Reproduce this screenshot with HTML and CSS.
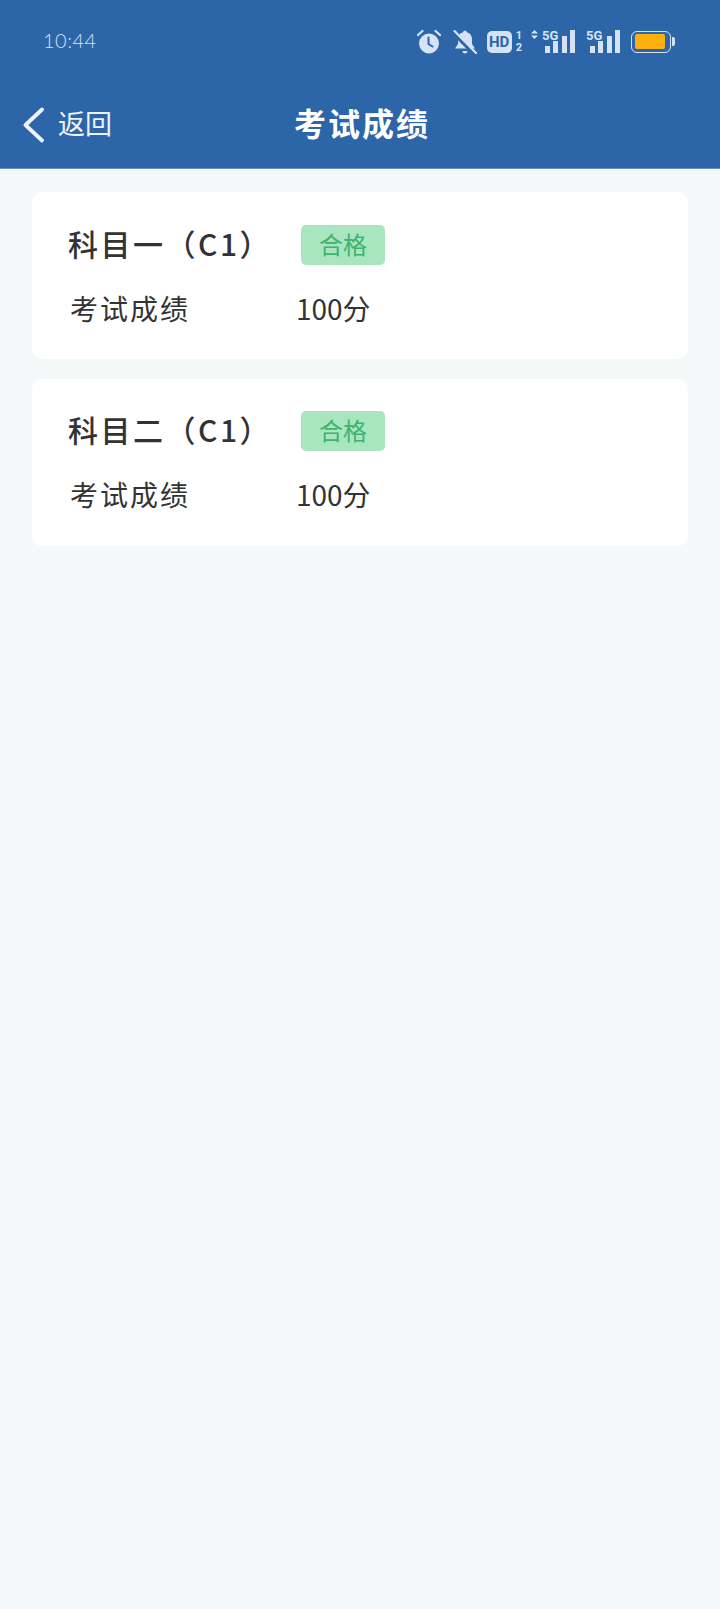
FILE: index.html
```html
<!DOCTYPE html>
<html lang="zh-CN">
  <head>
    <meta charset="UTF-8" />
    <title>考试成绩</title>
    <meta name="viewport" content="width=device-width, initial-scale=1.0" />
    <link rel="stylesheet" href="styles.css">
  </head>
  <body>
    <header class="top">
      <div class="status">
        <span class="clock">10:44</span>
        <div class="status-icons">
          <svg class="ic-alarm" width="24" height="24" viewBox="0 0 24 24">
            <circle cx="12" cy="13.500" r="10" fill="#d5e3f5" />
            <path d="M11.500 7.500v6.500l4 2.500" fill="none" stroke="#2c66a9" stroke-width="2" stroke-linecap="round" />
            <path d="M1 5l4.500-4M23 5l-4.500-4" fill="none" stroke="#d5e3f5" stroke-width="2.200" stroke-linecap="round" />
          </svg>
          <svg class="ic-bell" width="24" height="24" viewBox="0 0 24 24">
            <path d="M12 0.500c-1 0-1.800.7-1.800 1.800C6.500 3.200 5 6 5 9.500v4.500l-3 4.500h20l-3-4.500v-4.500c0-3.500-1.500-6.300-5.200-7.200C13.800 1.200 13 .5 12 .5z" fill="#d5e3f5" />
            <path d="M9.500 21h5c0 1.500-1 2.500-2.500 2.500s-2.500-1-2.500-2.500z" fill="#d5e3f5" />
            <path d="M0 2.500l22 22" stroke="#2c66a9" stroke-width="4" />
            <path d="M1.500 1l21.500 22" stroke="#d5e3f5" stroke-width="2.200" stroke-linecap="round" />
          </svg>
          <div class="hd">
            <span class="hd-box">HD</span>
            <span class="hd-nums"><i>1</i><i>2</i></span>
          </div>
          <div class="signal">
            <span class="arrows">
              <svg width="7" height="9" viewBox="0 0 7 9"><path d="M3.500 0l3.500 3.500h-7zM3.500 9l3.500-3.500h-7z" fill="#d5e3f5" /></svg>
            </span>
            <span class="net">5G</span>
            <div class="bars">
              <i class="b1"></i><i class="b2"></i><i class="b3"></i><i class="b4"></i>
            </div>
          </div>
          <div class="signal second">
            <span class="net">5G</span>
            <div class="bars">
              <i class="b1"></i><i class="b2"></i><i class="b3"></i><i class="b4"></i>
            </div>
          </div>
          <div class="battery">
            <div class="battery-body"><div class="battery-level"></div></div>
            <div class="battery-tip"></div>
          </div>
        </div>
      </div>
      <nav class="bar">
        <a class="back" href="#">
          <svg class="chevron" width="22" height="36" viewBox="0 0 22 36">
            <path d="M20 2.500L3.500 18 20 33.500" fill="none" stroke="#eef3fa" stroke-width="3.800" stroke-linecap="round" stroke-linejoin="round" />
          </svg>
          <span>返回</span>
        </a>
        <h1>考试成绩</h1>
      </nav>
    </header>

    <main class="list">
      <section class="card">
        <h2>科目一（C1）</h2>
        <span class="tag">合格</span>
        <span class="label">考试成绩</span>
        <span class="score">100分</span>
      </section>
      <section class="card">
        <h2>科目二（C1）</h2>
        <span class="tag">合格</span>
        <span class="label">考试成绩</span>
        <span class="score">100分</span>
      </section>
    </main>
  </body>
</html>
```

FILE: styles.css
```css
body {
  margin: 0;
  padding: 0;
  min-height: 1609px;
  background: #f4f8f9;
  color: #333;
  font-family: "Noto Sans CJK SC", "Noto Sans", sans-serif;
}

.top {
  height: 169px;
  background-color: #2c66a9;
  color: white;
  box-sizing: border-box;
  border-bottom: 1px solid #5f93c2;
}

.status {
  height: 80px;
  display: flex;
  justify-content: space-between;
  align-items: center;
  padding: 3px 45px 0 43px;
  box-sizing: border-box;
}
.clock {
  margin-bottom: 4px;
  font-family: "Lato", sans-serif;
  font-size: 20px;
  font-weight: 300;
  letter-spacing: 0.5px;
  color: #d5e3f5;
}
.status-icons {
  display: flex;
  align-items: center;
}
.ic-alarm {
  margin-right: 12px;
}
.ic-bell {
  margin-right: 10px;
}

.hd {
  display: flex;
  align-items: center;
  gap: 4px;
  margin-right: 9px;
}
.hd-box {
  width: 25px;
  height: 22px;
  border-radius: 5px;
  background: #d5e3f5;
  color: #2c66a9;
  text-align: center;
  font: bold 15px/22px "Roboto", sans-serif;
}
.hd-nums {
  display: flex;
  flex-direction: column;
  font: bold 11px/12px "Roboto", sans-serif;
  color: #d5e3f5;
}
.hd-nums i {
  font-style: normal;
}

.signal {
  position: relative;
  width: 44px;
  height: 23px;
  display: flex;
  justify-content: flex-end;
  align-items: flex-end;
  margin-right: 11px;
}
.signal.second {
  width: 34px;
}
.arrows {
  position: absolute;
  left: 0;
  top: 0;
  line-height: 0;
}
.net {
  position: absolute;
  left: 11px;
  top: -1px;
  font: bold 13px/13px "Roboto", sans-serif;
  color: #d5e3f5;
}
.second .net {
  left: 0;
}
.bars {
  display: flex;
  align-items: flex-end;
  gap: 3.500px;
}
.bars i {
  display: block;
  width: 5px;
  background: #d5e3f5;
}
.bars .b1 {
  height: 7px;
}
.bars .b2 {
  height: 12px;
}
.bars .b3 {
  height: 17px;
}
.bars .b4 {
  height: 23px;
}

.battery {
  display: flex;
  align-items: center;
}
.battery-body {
  width: 40px;
  height: 22px;
  box-sizing: border-box;
  border: 1.500px solid #d5e3f5;
  border-radius: 6px;
  padding: 2.500px;
}
.battery-level {
  width: 30px;
  height: 100%;
  background: #fbb00f;
  border-radius: 2px;
}
.battery-tip {
  width: 3px;
  height: 9px;
  margin-left: 1px;
  background: #d5e3f5;
  border-radius: 0 2px 2px 0;
}

.bar {
  position: relative;
  height: 84px;
  display: flex;
  align-items: center;
  padding-left: 22px;
}
.back {
  display: flex;
  align-items: center;
  gap: 14px;
  color: #eef3fa;
  text-decoration: none;
  font-size: 27px;
}
.chevron {
  margin-top: 5px;
}
.bar h1 {
  position: absolute;
  left: 0;
  right: 0;
  margin: 0;
  text-align: center;
  font-size: 32px;
  font-weight: bold;
  letter-spacing: 2px;
  padding-left: 4px;
}

.list {
  padding: 23px 32px 0;
  display: flex;
  flex-direction: column;
  gap: 19.500px;
}
.card {
  height: 167px;
  box-sizing: border-box;
  background: #ffffff;
  border-radius: 10px;
  padding: 32px 36px 0;
  display: grid;
  grid-template-columns: 233px 1fr;
  grid-auto-rows: 41px;
  row-gap: 24px;
  align-items: center;
}
.card h2 {
  margin: 0 0 4px;
  font-size: 30px;
  font-weight: 500;
  letter-spacing: 2.500px;
  white-space: nowrap;
}
.tag {
  justify-self: start;
  width: 84px;
  height: 40px;
  line-height: 37px;
  text-align: center;
  background: #a9e6bf;
  border-radius: 5px;
  color: #3cb371;
  font-size: 24px;
}
.label {
  font-size: 28px;
  letter-spacing: 2px;
  padding-left: 2px;
  margin-bottom: 4px;
}
.score {
  font-size: 28px;
  margin: 0 0 4px -5px;
}
```
